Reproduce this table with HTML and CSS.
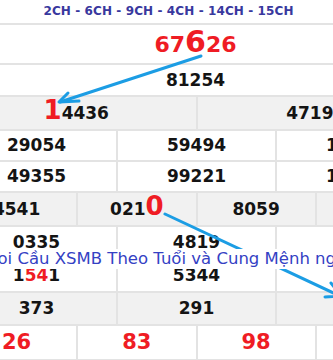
FILE: index.html
```html
<!DOCTYPE html>
<html lang="vi">
<head>
<meta charset="utf-8">
<title>Soi Cầu XSMB</title>
<link rel="stylesheet" href="styles.css">
</head>
<body>
<div class="thumb">
  <div class="title">2CH - 6CH - 9CH - 4CH - 14CH - 15CH</div>
  <div class="sheet">
    <div class="row c1 h40 hero"><span class="cell">67<span class="big">6</span>26</span></div>
    <div class="row c1 h32"><span class="cell">81254</span></div>
    <div class="row c2 h34 alt"><span class="cell"><span class="red lg">1</span>4436</span><span class="cell">47190</span></div>
    <div class="row c3 h31"><span class="cell">29054</span><span class="cell">59494</span><span class="cell">18273</span></div>
    <div class="row c3 h31"><span class="cell">49355</span><span class="cell">99221</span><span class="cell">16812</span></div>
    <div class="row c4 h34 alt"><span class="cell">4541</span><span class="cell">021<span class="red lg">0</span></span><span class="cell">8059</span><span class="cell">6230</span></div>
    <div class="row c3 h33"><span class="cell">0335</span><span class="cell">4819</span><span class="cell">1706</span></div>
    <div class="row c3 h33"><span class="cell">1<span class="red">54</span>1</span><span class="cell">5344</span><span class="cell">1928</span></div>
    <div class="row c3 h33 alt"><span class="cell">373</span><span class="cell">291</span><span class="cell">645</span></div>
    <div class="row c4 h35 loto"><span class="cell">26</span><span class="cell">83</span><span class="cell">98</span><span class="cell">07</span></div>
  </div>
  <svg class="arrows" width="333" height="360" viewBox="0 0 333 360">
    <g fill="none" stroke="#1c9de4" stroke-width="3" stroke-linecap="round" stroke-linejoin="round">
      <line x1="201" y1="56" x2="60" y2="102"/>
      <polyline points="68,93 59,102 79,101"/>
      <line x1="165" y1="214" x2="340" y2="296"/>
      <polyline points="331,283 341,296 325,297"/>
    </g>
  </svg>
  <div class="caption">Soi Cầu XSMB Theo Tuổi và Cung Mệnh người chơi</div>
</div>
</body>
</html>
```
FILE: styles.css
```css
body {
  margin: 0;
  background: #ffffff;
}

.thumb {
  position: relative;
  width: 333px;
  height: 360px;
  overflow: hidden;
  background: #ffffff;
  font-family: "DejaVu Sans", "Liberation Sans", sans-serif;
}

.title {
  box-sizing: border-box;
  height: 25px;
  border-bottom: 2px solid #e3e3e3;
  padding-left: 4px;
  text-align: center;
  font-weight: bold;
  font-size: 12px;
  letter-spacing: 0.1px;
  line-height: 23px;
  color: #38389e;
  white-space: nowrap;
}

.sheet {
  margin-left: -43px;
  width: 477px;
}

.row {
  display: grid;
  box-sizing: border-box;
  border-bottom: 2px solid #e3e3e3;
  font-weight: bold;
  font-size: 17px;
  color: #141414;
}

.c1 { grid-template-columns: 1fr; }
.c2 { grid-template-columns: repeat(2, 1fr); }
.c3 { grid-template-columns: repeat(3, 1fr); }
.c4 { grid-template-columns: repeat(4, 1fr); }

.h40 { height: 40px; padding-top: 2px; line-height: 36px; }
.h35 { height: 35px; line-height: 33px; }
.h34 { height: 34px; line-height: 32px; }
.h33 { height: 33px; line-height: 31px; }
.h32 { height: 32px; line-height: 30px; }
.h31 { height: 31px; line-height: 29px; }

.alt { background: #f1f1f1; }

.cell {
  display: block;
  text-align: center;
  white-space: nowrap;
  border-left: 2px solid #e3e3e3;
}

.cell:first-child {
  border-left: none;
}

.hero {
  font-size: 22px;
  color: #ef1c24;
}

.big {
  font-size: 30px;
  line-height: 0;
}

.red {
  color: #ef1c24;
}

.lg {
  font-size: 26px;
  line-height: 0;
}

.loto {
  font-size: 21px;
  color: #ef1c24;
}

.arrows {
  position: absolute;
  left: 0;
  top: 0;
}

.caption {
  position: absolute;
  left: -13px;
  top: 249px;
  width: 420px;
  height: 20px;
  background: #ffffff;
  font-size: 16.5px;
  line-height: 20px;
  color: #3441c4;
  white-space: nowrap;
}
```
